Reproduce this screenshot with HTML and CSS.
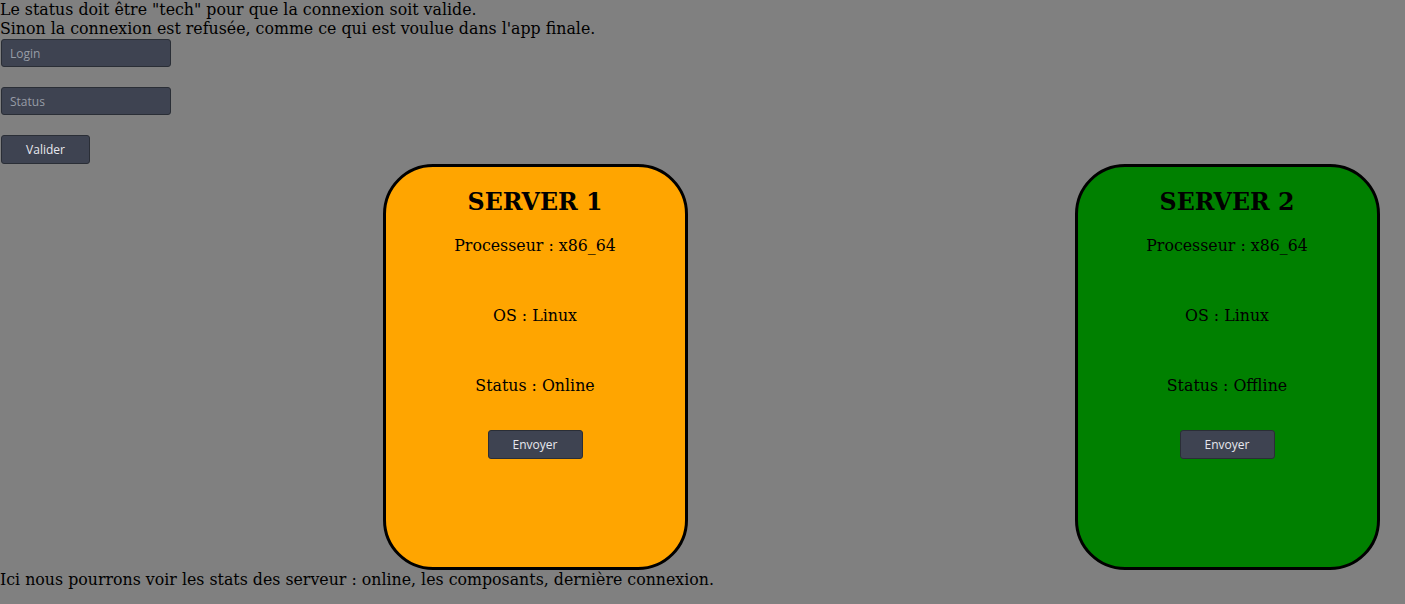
FILE: index.html
```html
<!DOCTYPE html>
<html lang="fr">
<head>
<meta charset="utf-8">
<title>Serveurs</title>
<link rel="stylesheet" href="styles.css">
</head>
<body>
<div class="intro">Le status doit être "tech" pour que la connexion soit valide.<br>Sinon la connexion est refusée, comme ce qui est voulue dans l'app finale.</div>
<form class="login">
  <input class="field" type="text" placeholder="Login">
  <input class="field" type="text" placeholder="Status">
  <button class="btn btn-valider" type="button">Valider</button>
</form>
<div class="servers">
  <div class="card card-orange">
    <h2 class="card-title">SERVER 1</h2>
    <p class="line">Processeur : x86_64</p>
    <p class="line">OS : Linux</p>
    <p class="line">Status : Online</p>
    <button class="btn btn-send" type="button">Envoyer</button>
  </div>
  <div class="card card-green">
    <h2 class="card-title">SERVER 2</h2>
    <p class="line">Processeur : x86_64</p>
    <p class="line">OS : Linux</p>
    <p class="line">Status : Offline</p>
    <button class="btn btn-send" type="button">Envoyer</button>
  </div>
</div>
<div class="footer">Ici nous pourrons voir les stats des serveur : online, les composants, dernière connexion.</div>
</body>
</html>
```
FILE: styles.css
```css
html, body {
  margin: 0;
  padding: 0;
  background: #808080;
  font-family: "DejaVu Serif", serif;
  font-size: 15.8px;
  color: #000;
}
.intro {
  line-height: 19px;
}
.login {
  display: flex;
  flex-direction: column;
  align-items: flex-start;
  gap: 20px;
  padding: 1px 0 0 1px;
}
.field {
  box-sizing: border-box;
  width: 170px;
  height: 28px;
  margin: 0;
  padding: 0 8px;
  background: #3e4351;
  border: 1px solid #2a2e36;
  border-radius: 3px;
  font-family: "Open Sans", sans-serif;
  font-size: 12px;
  color: #e0e0e0;
  outline: none;
}
.field::placeholder {
  color: #979ca6;
}
.btn {
  box-sizing: border-box;
  height: 29px;
  margin: 0;
  padding: 0;
  background: #3e4351;
  border: 1px solid #2a2e36;
  border-radius: 3px;
  font-family: "Open Sans", sans-serif;
  font-size: 12px;
  color: #e8e8ee;
}
.btn-valider {
  width: 89px;
}
.btn-send {
  width: 95px;
}
.servers {
  display: flex;
  gap: 387px;
  padding-left: 382.5px;
}
.card {
  box-sizing: border-box;
  width: 305px;
  height: 406px;
  border: 3px solid #000;
  border-radius: 50px;
  display: flex;
  flex-direction: column;
  align-items: center;
}
.card-orange {
  background: #ffa500;
}
.card-green {
  background: #008000;
}
.card-title {
  margin: 21px 0 20px;
  font-size: 23.7px;
  line-height: 28px;
  font-weight: bold;
}
.line {
  margin: 0 0 51px;
  line-height: 19px;
}
.line:nth-of-type(3) {
  margin-bottom: 35px;
}
.footer {
  line-height: 19px;
}
```
